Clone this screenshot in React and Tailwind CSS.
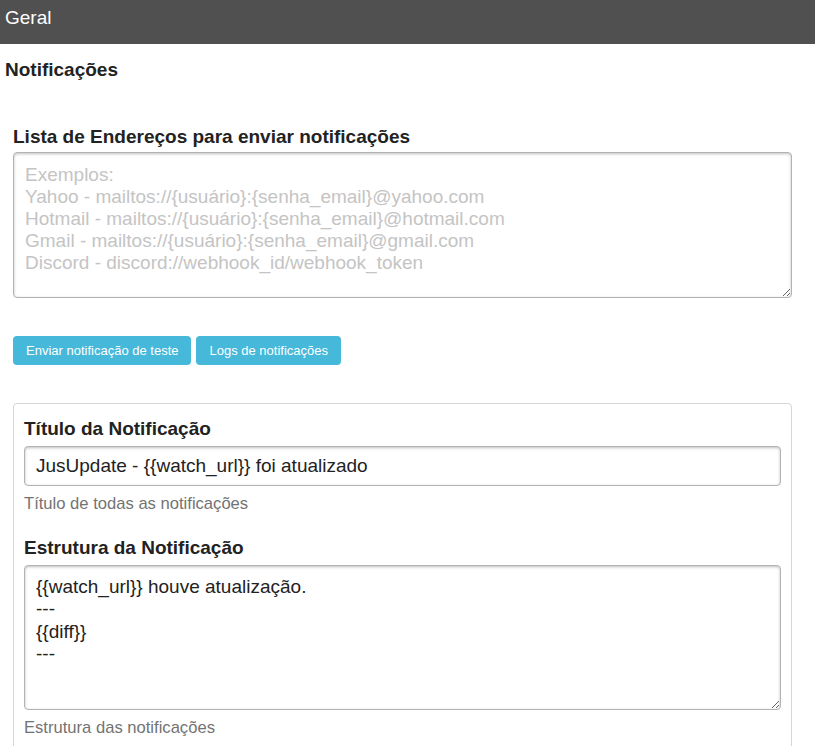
export default function App() {
  const font = { fontFamily: '"Liberation Sans", Arial, sans-serif' };
  return (
    <div className="w-[815px] h-[746px] overflow-hidden bg-white text-[#222]" style={font}>
      <div className="h-[44px] bg-[#505050] text-white text-[19px] leading-[22px] pt-[7px] px-[5px]">Geral</div>
      <div className="px-[5px] pt-[15px] text-[19px] leading-[22px] font-bold text-[#222]">Notificações</div>
      <div className="px-[13px]">
        <div className="mt-[45px] text-[19px] leading-[22px] font-bold">Lista de Endereços para enviar notificações</div>
        <textarea
          className="mt-[4px] block w-[779px] h-[146px] border border-[#b3b3b3] rounded-[4px] shadow-[inset_0_1px_3px_rgba(0,0,0,0.25)] px-[11px] pt-[11px] pb-[8px] text-[19px] leading-[22px] text-[#333] placeholder:text-[#c4c4c4] outline-none resize-y"
          placeholder={"Exemplos:\nYahoo - mailtos://{usuário}:{senha_email}@yahoo.com\nHotmail - mailtos://{usuário}:{senha_email}@hotmail.com\nGmail - mailtos://{usuário}:{senha_email}@gmail.com\nDiscord - discord://webhook_id/webhook_token"}
          style={font}
        />
        <div className="mt-[38px] flex gap-[5px]">
          <button className="h-[29px] px-[13px] rounded-[4px] bg-[#46b8da] text-white text-[13px]" style={font}>Enviar notificação de teste</button>
          <button className="h-[29px] px-[13px] rounded-[4px] bg-[#46b8da] text-white text-[13px]" style={font}>Logs de notificações</button>
        </div>
        <div className="mt-[38px] w-[779px] border border-[#d6d6d6] rounded-[4px] px-[10px] pt-[14px] pb-[20px]">
          <div className="text-[19px] leading-[22px] font-bold">Título da Notificação</div>
          <input
            className="mt-[6px] block w-[757px] h-[40px] border border-[#b3b3b3] rounded-[4px] shadow-[inset_0_1px_3px_rgba(0,0,0,0.25)] px-[11px] text-[19px] text-[#222] outline-none"
            defaultValue="JusUpdate - {{watch_url}} foi atualizado"
            style={font}
          />
          <div className="mt-[8px] text-[16.6px] leading-[20px] text-[#737373]">Título de todas as notificações</div>
          <div className="mt-[23px] text-[19px] leading-[22px] font-bold">Estrutura da Notificação</div>
          <textarea
            className="mt-[6px] block w-[757px] h-[145px] border border-[#b3b3b3] rounded-[4px] shadow-[inset_0_1px_3px_rgba(0,0,0,0.25)] px-[11px] pt-[10px] pb-[6px] text-[19px] leading-[22.3px] text-[#222] outline-none resize-y"
            defaultValue={"{{watch_url}} houve atualização.\n---\n{{diff}}\n---"}
            style={font}
          />
          <div className="mt-[8px] text-[16.6px] leading-[20px] text-[#737373]">Estrutura das notificações</div>
        </div>
      </div>
    </div>
  );
}
